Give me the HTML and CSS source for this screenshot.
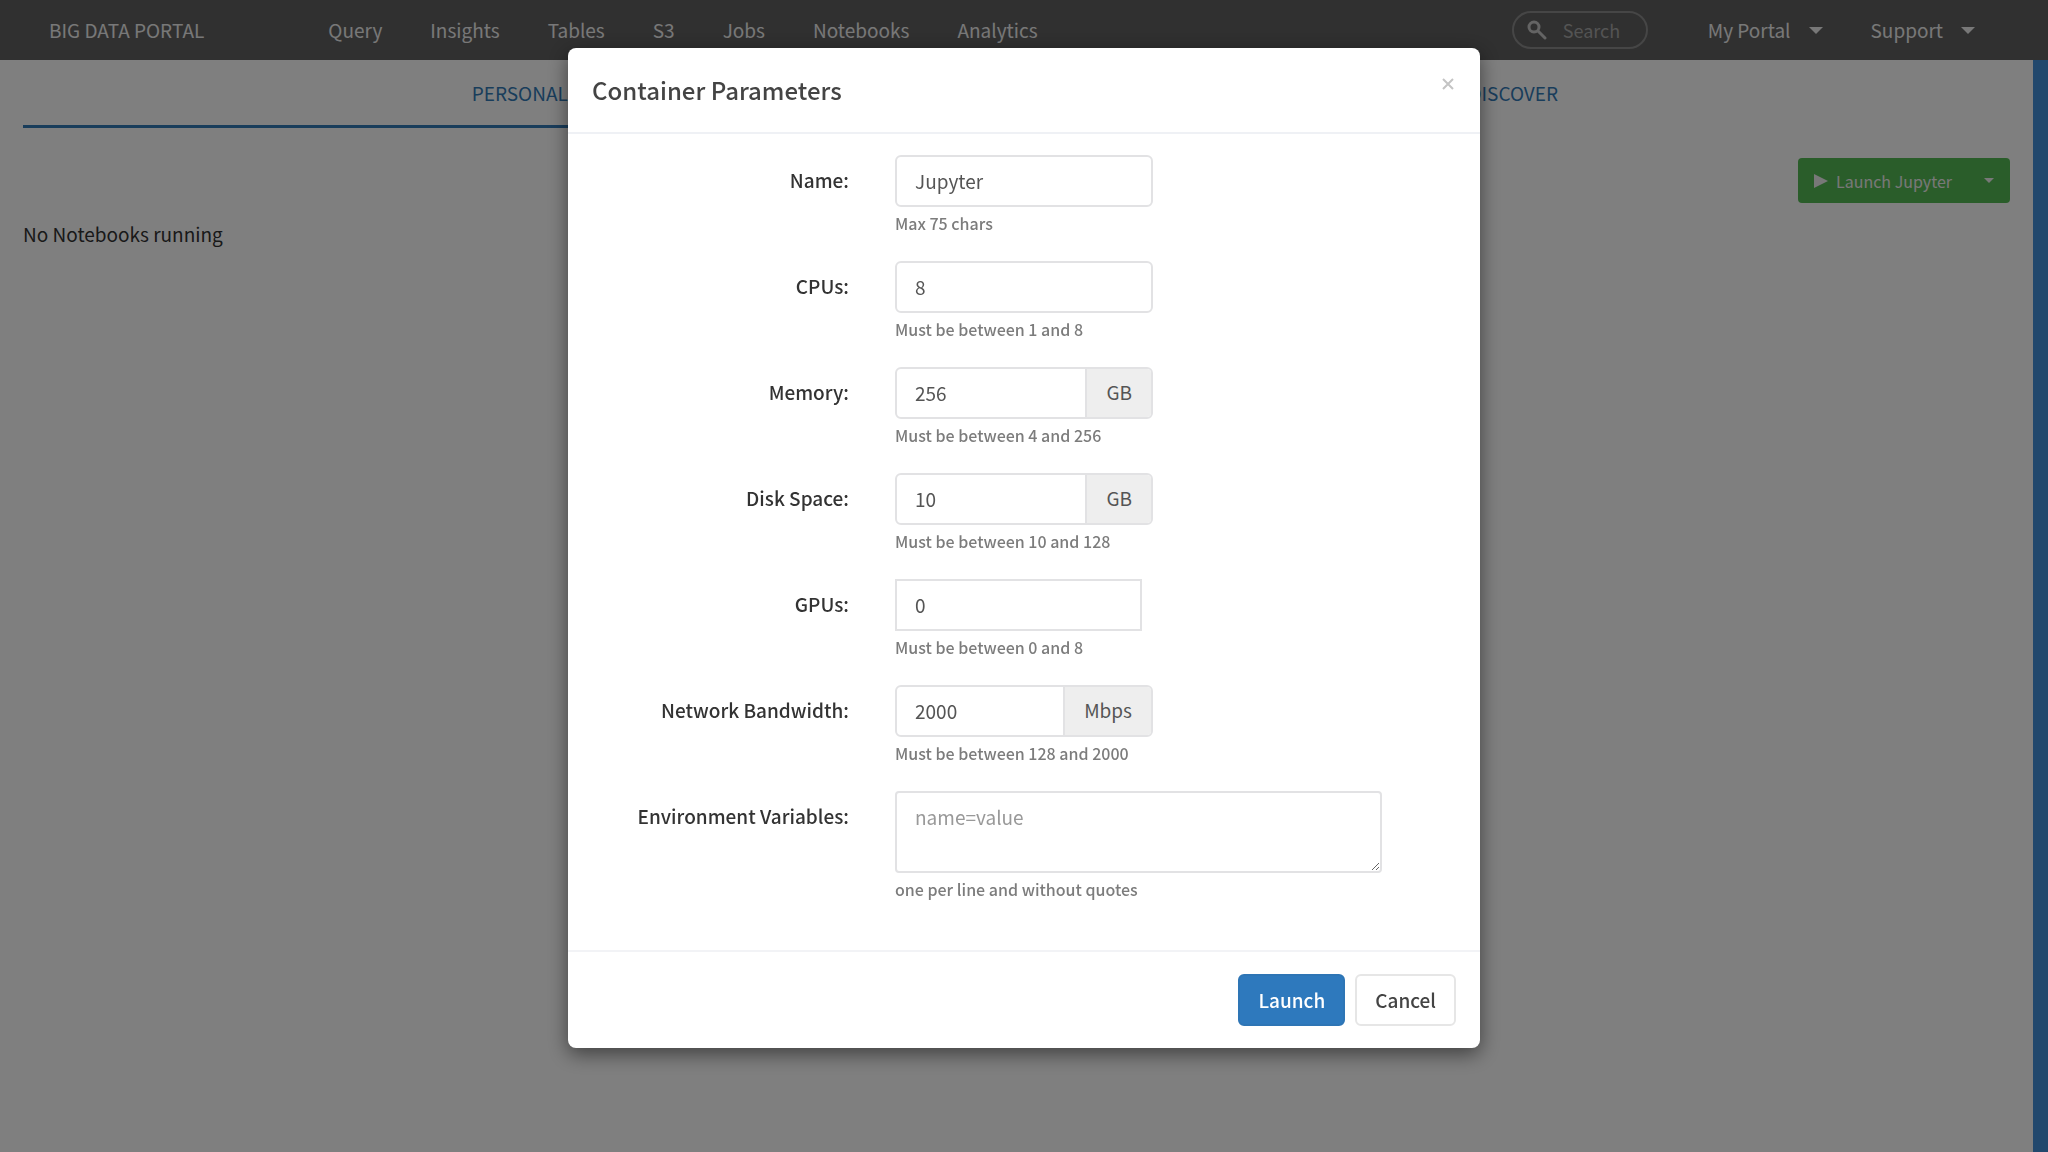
FILE: index.html
```html
<!DOCTYPE html>
<html lang="en">
<head>
    <meta charset="UTF-8">
    <meta name="viewport" content="width=device-width, initial-scale=1.0">
    <title>Big Data Portal - Notebooks</title>
    <link rel="stylesheet" href="styles.css">
</head>
<body>
    <header class="navbar">
        <a href="#" class="brand">BIG DATA PORTAL</a>
        <nav class="nav-links">
            <a href="#">Query</a>
            <a href="#">Insights</a>
            <a href="#">Tables</a>
            <a href="#">S3</a>
            <a href="#">Jobs</a>
            <a href="#">Notebooks</a>
            <a href="#">Analytics</a>
        </nav>
        <div class="nav-right">
            <label class="search">
                <svg class="search-icon" viewBox="0 0 20 20" aria-hidden="true">
                    <circle cx="7" cy="7" r="5" fill="none" stroke="currentColor" stroke-width="3"/>
                    <path d="M11 11 L18 18" stroke="currentColor" stroke-width="3" stroke-linecap="round"/>
                </svg>
                <input type="text" placeholder="Search" aria-label="Search">
            </label>
            <button type="button" class="nav-menu">My Portal <span class="caret"></span></button>
            <button type="button" class="nav-menu">Support <span class="caret"></span></button>
        </div>
    </header>

    <div class="page">
        <main class="content">
            <nav class="tabs">
                <a href="#" class="tab active">PERSONAL</a>
                <a href="#" class="tab">DISCOVER</a>
            </nav>
            <div class="toolbar">
                <div class="btn-group">
                    <button type="button" class="btn-green">
                        <svg class="play-icon" viewBox="0 0 14 14" aria-hidden="true"><path d="M0 0 L14 7 L0 14 Z" fill="currentColor"/></svg>
                        Launch Jupyter
                    </button>
                    <button type="button" class="btn-green btn-toggle" aria-label="More launch options"><span class="caret caret-small"></span></button>
                </div>
            </div>
            <p class="empty">No Notebooks running</p>
        </main>
        <aside class="side-bar"></aside>
    </div>

    <div class="overlay">
        <form class="modal" role="dialog" aria-labelledby="modalTitle">
            <div class="modal-header">
                <h1 id="modalTitle">Container Parameters</h1>
                <button type="button" class="close" aria-label="Close">
                    <svg viewBox="0 0 12 12" aria-hidden="true"><path d="M1 1 L11 11 M11 1 L1 11" stroke="currentColor" stroke-width="2"/></svg>
                </button>
            </div>

            <div class="modal-body">
                <div class="row">
                    <label for="name">Name:</label>
                    <div class="field">
                        <div class="control"><input type="text" id="name" value="Jupyter"></div>
                        <p class="help">Max 75 chars</p>
                    </div>
                </div>
                <div class="row">
                    <label for="cpus">CPUs:</label>
                    <div class="field">
                        <div class="control"><input type="text" id="cpus" value="8"></div>
                        <p class="help">Must be between 1 and 8</p>
                    </div>
                </div>
                <div class="row">
                    <label for="memory">Memory:</label>
                    <div class="field">
                        <div class="control"><input type="text" id="memory" value="256"><span class="addon">GB</span></div>
                        <p class="help">Must be between 4 and 256</p>
                    </div>
                </div>
                <div class="row">
                    <label for="disk">Disk Space:</label>
                    <div class="field">
                        <div class="control"><input type="text" id="disk" value="10"><span class="addon">GB</span></div>
                        <p class="help">Must be between 10 and 128</p>
                    </div>
                </div>
                <div class="row">
                    <label for="gpus">GPUs:</label>
                    <div class="field">
                        <div class="control control-square"><input type="text" id="gpus" value="0"></div>
                        <p class="help">Must be between 0 and 8</p>
                    </div>
                </div>
                <div class="row">
                    <label for="network">Network Bandwidth:</label>
                    <div class="field">
                        <div class="control"><input type="text" id="network" value="2000"><span class="addon">Mbps</span></div>
                        <p class="help">Must be between 128 and 2000</p>
                    </div>
                </div>
                <div class="row">
                    <label for="env">Environment Variables:</label>
                    <div class="field">
                        <textarea id="env" placeholder="name=value"></textarea>
                        <p class="help">one per line and without quotes</p>
                    </div>
                </div>
            </div>

            <div class="modal-footer">
                <button type="button" class="btn btn-primary">Launch</button>
                <button type="button" class="btn">Cancel</button>
            </div>
        </form>
    </div>
</body>
</html>
```
FILE: styles.css
```css
* {
    box-sizing: border-box;
}
body {
    margin: 0;
    min-height: 100vh;
    display: flex;
    flex-direction: column;
    background: #ffffff;
    color: #333333;
    font-family: "Noto Sans CJK SC", "Open Sans", sans-serif;
    font-size: 19px;
    line-height: 28px;
}
a {
    text-decoration: none;
}
button, input, textarea {
    font: inherit;
    color: inherit;
}
button {
    cursor: pointer;
}

/* Top navigation */
.navbar {
    display: flex;
    align-items: center;
    height: 60px;
    padding: 0 73px 0 49px;
    background: #606060;
    color: #f0f0f0;
}
.navbar a {
    color: #f0f0f0;
}
.brand {
    margin-right: 124px;
}
.nav-links {
    display: flex;
    gap: 48px;
}
.nav-right {
    display: flex;
    align-items: center;
    margin-left: auto;
}
.search {
    display: flex;
    align-items: center;
    width: 136px;
    height: 38px;
    padding: 0 13px;
    margin-right: 60px;
    border: 2px solid #8c8c8c;
    border-radius: 19px;
    color: #c8c8c8;
}
.search-icon {
    flex: none;
    width: 20px;
    height: 20px;
    margin-right: 16px;
}
.search input {
    width: 100%;
    min-width: 0;
    padding: 0;
    border: 0;
    outline: 0;
    background: none;
    font-size: 18px;
}
.search input::placeholder {
    color: #a8a8a8;
}
.nav-menu {
    display: flex;
    align-items: center;
    gap: 18px;
    padding: 0;
    border: 0;
    background: none;
    color: #f0f0f0;
}
.nav-menu + .nav-menu {
    margin-left: 48px;
}
.caret {
    border-top: 7px solid currentColor;
    border-left: 7px solid transparent;
    border-right: 7px solid transparent;
}
.caret-small {
    border-width: 5px;
    border-bottom: 0;
}

/* Page behind the dialog */
.page {
    flex: 1;
    display: flex;
}
.content {
    flex: 1;
    padding: 0 23px;
}
.side-bar {
    width: 15px;
    background: #4490da;
}
.tabs {
    display: flex;
}
.tab {
    flex: 1;
    padding: 19px 0 18px;
    border-bottom: 3px solid transparent;
    color: #337ab7;
    text-align: center;
}
.tab.active {
    border-bottom-color: #337ab7;
}
.toolbar {
    display: flex;
    justify-content: flex-end;
    margin-top: 30px;
}
.btn-group {
    display: flex;
    border-radius: 4px;
    overflow: hidden;
}
.btn-green {
    display: flex;
    align-items: center;
    gap: 8px;
    height: 45px;
    padding: 0 16px;
    border: 0;
    background: #55bb55;
    color: #f0f0f0;
    font-size: 16px;
}
.btn-toggle {
    padding: 0 16px;
}
.play-icon {
    width: 14px;
    height: 14px;
}
.empty {
    margin: 17px 0;
}

/* Dialog */
.overlay {
    position: fixed;
    inset: 0;
    padding: 48px 16px;
    overflow: auto;
    background: rgba(0, 0, 0, 0.5);
}
.modal {
    max-width: 912px;
    margin: 0 auto;
    background: #ffffff;
    border-radius: 8px;
    box-shadow: 0 6px 20px rgba(0, 0, 0, 0.5);
}
.modal-header {
    display: flex;
    justify-content: space-between;
    padding: 24px;
    border-bottom: 2px solid #eff1f5;
}
.modal-header h1 {
    margin: 0;
    color: #444444;
    font-size: 24px;
    font-weight: 500;
    line-height: 36px;
}
.close {
    display: flex;
    height: 24px;
    padding: 6px 2px;
    border: 0;
    background: none;
    color: #c4c4c4;
}
.close svg {
    width: 12px;
    height: 12px;
}
.modal-body {
    padding: 21px 24px 49px 0;
}
.row {
    display: grid;
    grid-template-columns: 281px 1fr;
    gap: 46px;
}
.row + .row {
    margin-top: 26px;
}
.row label {
    padding-top: 11px;
    font-weight: 500;
    text-align: right;
}
.control {
    display: flex;
    max-width: 258px;
    height: 52px;
    border: 2px solid #e2e2e4;
    border-radius: 6px;
    overflow: hidden;
}
.control-square {
    max-width: 247px;
    border-radius: 0;
}
.control input {
    flex: 1;
    min-width: 0;
    padding: 0 18px;
    border: 0;
    outline: 0;
    background: none;
    color: #555555;
}
.addon {
    padding: 9px 19px;
    border-left: 2px solid #e2e2e4;
    background: #eeeeee;
    color: #555555;
}
textarea {
    display: block;
    width: 100%;
    max-width: 487px;
    height: 82px;
    padding: 10px 18px;
    border: 2px solid #e2e2e4;
    border-radius: 4px;
    outline: 0;
}
textarea::placeholder {
    color: #999999;
}
.help {
    margin: 4px 0 0;
    color: #7c7c7c;
    font-size: 16px;
    font-weight: 500;
    line-height: 24px;
}
.modal-footer {
    display: flex;
    justify-content: flex-end;
    gap: 10px;
    padding: 22px 24px;
    border-top: 2px solid #f2f3f6;
}
.btn {
    height: 52px;
    padding: 0 18px;
    border: 2px solid #e6e6e6;
    border-radius: 6px;
    background: #ffffff;
    color: #444444;
    font-weight: 500;
}
.btn-primary {
    border-color: #2e75b5;
    background: #2e79bd;
    color: #ffffff;
}
```
